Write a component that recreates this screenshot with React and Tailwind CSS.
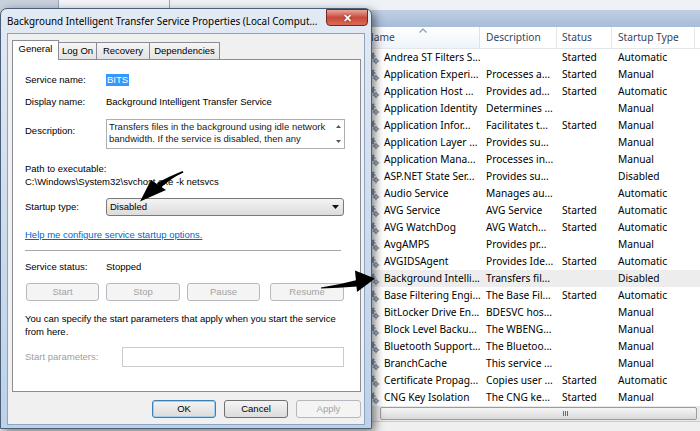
import React from "react";

const rows = [
  ["Andrea ST Filters S...", "", "Started", "Automatic"],
  ["Application Experi...", "Processes a...", "Started", "Manual"],
  ["Application Host ...", "Provides ad...", "Started", "Automatic"],
  ["Application Identity", "Determines ...", "", "Manual"],
  ["Application Infor...", "Facilitates t...", "Started", "Manual"],
  ["Application Layer ...", "Provides su...", "", "Manual"],
  ["Application Mana...", "Processes in...", "", "Manual"],
  ["ASP.NET State Ser...", "Provides su...", "", "Disabled"],
  ["Audio Service", "Manages au...", "", "Automatic"],
  ["AVG Service", "AVG Service", "Started", "Automatic"],
  ["AVG WatchDog", "AVG Watch...", "Started", "Automatic"],
  ["AvgAMPS", "Provides pr...", "", "Manual"],
  ["AVGIDSAgent", "Provides Ide...", "Started", "Automatic"],
  ["Background Intelli...", "Transfers fil...", "", "Disabled"],
  ["Base Filtering Engi...", "The Base Fil...", "Started", "Automatic"],
  ["BitLocker Drive En...", "BDESVC hos...", "", "Manual"],
  ["Block Level Backu...", "The WBENG...", "", "Manual"],
  ["Bluetooth Support...", "The Bluetoo...", "", "Manual"],
  ["BranchCache", "This service ...", "", "Manual"],
  ["Certificate Propag...", "Copies user ...", "Started", "Automatic"],
  ["CNG Key Isolation", "The CNG ke...", "Started", "Manual"],
];

function Gear() {
  return (
    <svg width="14" height="14" viewBox="0 0 14 14">
      <g fill="#8795a8">
        <circle cx="5" cy="5" r="3.2" />
        <rect x="4.2" y="0.5" width="1.6" height="9" />
        <rect x="0.5" y="4.2" width="9" height="1.6" />
        <rect x="4.2" y="0.5" width="1.6" height="9" transform="rotate(45 5 5)" />
        <rect x="4.2" y="0.5" width="1.6" height="9" transform="rotate(-45 5 5)" />
        <circle cx="10" cy="10" r="2.3" />
        <rect x="9.4" y="6.6" width="1.2" height="6.8" />
        <rect x="6.6" y="9.4" width="6.8" height="1.2" />
      </g>
      <circle cx="5" cy="5" r="1.2" fill="#e8edf3" />
      <circle cx="10" cy="10" r="0.8" fill="#e8edf3" />
    </svg>
  );
}

function DisabledBtn({ children, className }) {
  return (
    <div
      className={
        "h-[18px] flex items-center justify-center rounded-[3px] border border-[#b5b8bc] bg-[#f4f4f4] text-[#a3a3a3] " +
        className
      }
    >
      {children}
    </div>
  );
}

export default function App() {
  const dlgFont = "font-['Liberation_Sans',Arial,sans-serif]";
  return (
    <div className="relative w-[700px] h-[431px] overflow-hidden bg-white font-['Noto_Sans',sans-serif]">
      {/* Background services window */}
      <div className="flex flex-col w-full h-full">
        <div className="h-[11px] flex bg-[#e4e8ee] border-b border-[#c3ccd8]">
          <div className="w-[58px] bg-[#c8d1dc]" />
          <div className="w-[112px] bg-[#f2f4f7] border-x border-[#9aa6b5]" />
          <div className="flex-1 bg-[#eef1f5]" />
        </div>
        <div className="h-[16px] bg-gradient-to-b from-[#bccfe4] to-[#a7bdd7]" />
        <div className="flex-1 flex">
          <div className="w-[362px] bg-white" />
          <div className="flex-1 flex flex-col text-[10.2px] text-black">
            <div className="h-[22px] flex items-center border-b border-[#e3e6ea] text-[#34455c]">
              <div className="relative w-[118px] h-full pl-[4px] flex items-center border-r border-[#dde3ea] bg-gradient-to-b from-[#ffffff] to-[#eef4fa]">
                Name
                <svg className="absolute left-[57px] top-[1px]" width="8" height="5" viewBox="0 0 8 5">
                  <path d="M0.5 4.5 L4 1 L7.5 4.5" fill="none" stroke="#8a9ab0" strokeWidth="1.2" />
                </svg>
              </div>
              <div className="w-[77px] h-full pl-[6px] flex items-center border-r border-[#e3e6ea]">Description</div>
              <div className="w-[55px] h-full pl-[5px] flex items-center border-r border-[#e3e6ea]">Status</div>
              <div className="w-[83px] h-full pl-[6px] flex items-center border-r border-[#e3e6ea]">Startup Type</div>
              <div className="flex-1" />
            </div>
            {rows.map((r, i) => (
              <div
                key={i}
                className={
                  "h-[17px] flex items-center whitespace-nowrap " + (i === 13 ? "bg-[#ededed]" : "")
                }
              >
                <div className="w-[22px] pl-[4px] flex items-center">
                  <Gear />
                </div>
                <div className="w-[96px]">{r[0]}</div>
                <div className="w-[77px] pl-[6px]">{r[1]}</div>
                <div className="w-[55px] pl-[5px]">{r[2]}</div>
                <div className="w-[83px] pl-[6px]">{r[3]}</div>
              </div>
            ))}
            <div className="h-[15px] flex bg-[#e9e9e9] py-[1px]">
              <div className="w-[18px]" />
              <div className="flex-1 mr-[3px] rounded-[2px] border border-[#9c9c9c] bg-gradient-to-b from-[#f6f6f6] to-[#d9d9d9] flex items-center pl-[182px]">
                <div className="flex gap-[1px]">
                  <div className="w-px h-[5px] bg-[#6b6b6b]" />
                  <div className="w-px h-[5px] bg-[#6b6b6b]" />
                  <div className="w-px h-[5px] bg-[#6b6b6b]" />
                </div>
              </div>
            </div>
          </div>
        </div>
        <div className="h-[10px] bg-[#efefef] border-t border-[#cbcbcb]" />
      </div>

      {/* Properties dialog */}
      <div className="absolute left-0 top-[8px] w-[372px] h-[421px] rounded-t-[7px] border border-[#4b5f78] bg-gradient-to-b from-[#e2eaf4] via-[#cddcee] to-[#bcd2ea] shadow-[3px_3px_10px_rgba(0,0,0,0.5)] flex flex-col z-10">
        <div className="relative h-[24px] flex items-center pl-[6px] text-[9.9px] text-black whitespace-nowrap">
          Background Intelligent Transfer Service Properties (Local Comput...
          <div className="absolute right-[3px] top-[0px] w-[42px] h-[17px] rounded-b-[4px] border border-[#6e2a22] bg-gradient-to-b from-[#e6a59a] via-[#c9493c] to-[#d96a55] flex items-center justify-center">
            <span className="text-white text-[11px] font-bold leading-none [text-shadow:0_0_2px_#5a1a12]">✕</span>
          </div>
        </div>
        <div className={"mx-[6px] mb-[3px] flex-1 bg-[#f0f0f0] border border-[#8ea3bd] pl-[4px] pr-[3px] pt-[6px] flex flex-col text-[9.5px] text-black " + dlgFont}>
          {/* Tabs */}
          <div className="h-[19px] flex items-end">
            <div className="relative z-10 w-[47px] h-[20px] -mb-px bg-white border border-b-0 border-[#898c95] flex items-center justify-center pb-[2px]">
              General
            </div>
            <div className="w-[39px] h-[17px] -ml-px bg-gradient-to-b from-[#f6f6f6] to-[#e3e3e3] border border-b-0 border-[#898c95] flex items-center justify-center">
              Log On
            </div>
            <div className="w-[54px] h-[17px] -ml-px bg-gradient-to-b from-[#f6f6f6] to-[#e3e3e3] border border-b-0 border-[#898c95] flex items-center justify-center">
              Recovery
            </div>
            <div className="w-[71px] h-[17px] -ml-px bg-gradient-to-b from-[#f6f6f6] to-[#e3e3e3] border border-b-0 border-[#898c95] flex items-center justify-center">
              Dependencies
            </div>
          </div>
          {/* Panel */}
          <div className="w-[349px] h-[333px] bg-white border border-[#898c95] pl-[12px] flex flex-col">
            <div className="mt-[12px] h-[16px] flex items-center">
              <div className="w-[81px]">Service name:</div>
              <span className="bg-[#3399ff] text-white px-[1px] leading-[12px]">BITS</span>
            </div>
            <div className="mt-[6px] h-[16px] flex items-center">
              <div className="w-[81px]">Display name:</div>
              <div>Background Intelligent Transfer Service</div>
            </div>
            <div className="mt-[9px] h-[30px] flex">
              <div className="w-[81px] pt-[5px]">Description:</div>
              <div className="w-[239px] h-[30px] border border-[#abadb3] flex">
                <div className="flex-1 pl-[2px] pt-[1px] leading-[12px] text-[#1a1a1a] overflow-hidden">
                  Transfers files in the background using idle network bandwidth. If the service is disabled, then any
                </div>
                <div className="w-[11px] flex flex-col items-center justify-between py-[5px]">
                  <svg width="5" height="3" viewBox="0 0 5 3"><path d="M0 3 L2.5 0 L5 3Z" fill="#555" /></svg>
                  <svg width="5" height="3" viewBox="0 0 5 3"><path d="M0 0 L2.5 3 L5 0Z" fill="#555" /></svg>
                </div>
              </div>
            </div>
            <div className="mt-[13px] h-[26px] leading-[13px]">
              <div>Path to executable:</div>
              <div>C:\Windows\System32\svchost.exe -k netsvcs</div>
            </div>
            <div className="mt-[10px] h-[18px] flex items-center">
              <div className="w-[81px]">Startup type:</div>
              <div className="w-[238px] h-[18px] rounded-[3px] border border-[#7a7a7a] bg-gradient-to-b from-[#f4f4f4] to-[#dcdcdc] flex items-center pl-[3px] pr-[4px] justify-between">
                <span>Disabled</span>
                <svg width="7" height="4" viewBox="0 0 7 4"><path d="M0 0 L3.5 4 L7 0Z" fill="#111" /></svg>
              </div>
            </div>
            <div className="mt-[11px] h-[16px] flex items-center">
              <span className="text-[#0066cc] underline">Help me configure service startup options.</span>
            </div>
            <div className="mt-[7px] w-[316px] h-px bg-[#a8a8a8]" />
            <div className="mt-[8px] h-[16px] flex items-center">
              <div className="w-[81px]">Service status:</div>
              <div>Stopped</div>
            </div>
            <div className="mt-[8px] flex">
              <DisabledBtn className="ml-[1px] w-[73px]">Start</DisabledBtn>
              <DisabledBtn className="ml-[7px] w-[74px]">Stop</DisabledBtn>
              <DisabledBtn className="ml-[7px] w-[73px]">Pause</DisabledBtn>
              <DisabledBtn className="ml-[10px] w-[74px]">Resume</DisabledBtn>
            </div>
            <div className="mt-[11px] h-[26px] leading-[13px]">
              <div>You can specify the start parameters that apply when you start the service</div>
              <div>from here.</div>
            </div>
            <div className="mt-[9px] h-[20px] flex items-center">
              <div className="w-[97px] text-[#a0a0a0]">Start parameters:</div>
              <div className="w-[222px] h-[20px] border border-[#c9cbcf] bg-white" />
            </div>
          </div>
          {/* Bottom buttons */}
          <div className="mt-[8px] w-[349px] flex justify-end gap-[8px]">
            <div className="w-[64px] h-[18px] rounded-[3px] border border-[#3c7fb1] bg-gradient-to-b from-[#f4f4f4] to-[#dcdcdc] shadow-[inset_0_0_0_1px_#9fd0f0] flex items-center justify-center">
              OK
            </div>
            <div className="w-[64px] h-[18px] rounded-[3px] border border-[#707070] bg-gradient-to-b from-[#f4f4f4] to-[#dcdcdc] flex items-center justify-center">
              Cancel
            </div>
            <DisabledBtn className="w-[65px]">Apply</DisabledBtn>
          </div>
        </div>
      </div>

      {/* Annotation arrows */}
      <svg className="absolute left-0 top-0 z-20 pointer-events-none" width="700" height="431" viewBox="0 0 700 431">
        <path d="M182.5 171 Q170 176 157 183 L160 188.5 Q171 178 183.5 172.5 Z" fill="#000" />
        <path d="M151 180 L166 190 L140 201.5 Z" fill="#000" />
        <path d="M321 287.5 Q338 285 357 280 L357 286.5 Q338 287.8 321 288.6 Z" fill="#000" />
        <path d="M355 270.5 L375 278.5 L357 292 Z" fill="#000" />
      </svg>
    </div>
  );
}
